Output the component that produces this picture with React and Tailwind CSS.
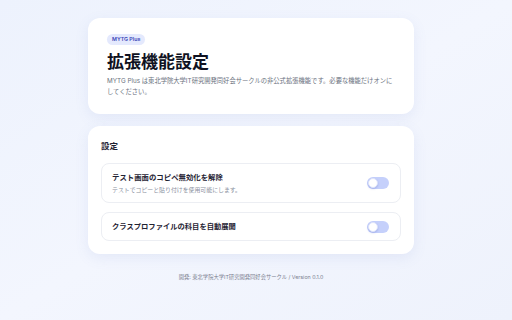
export default function App() {
  const font = { fontFamily: '"Inter", "Noto Sans CJK JP", sans-serif' };
  return (
    <div
      className="min-h-[320px] w-full bg-gradient-to-br from-[#edf2fd] via-[#f3f6fe] to-[#eef2fc] pt-[18px]"
      style={font}
    >
      <div className="ml-[88px] flex w-[326px] flex-col">
        <div className="rounded-[12px] bg-white px-[19px] pt-[16px] pb-[16px] shadow-[0_4px_14px_rgba(99,122,200,0.10)]">
          <div className="flex h-[11px] w-fit items-center rounded-full bg-[#e4e9fd] px-[5px] text-[5.3px] font-semibold leading-[11px] text-[#3b47b8]">
            MYTG Plus
          </div>
          <h1 className="mt-[5px] text-[17px] font-bold leading-[24px] text-[#0f1222]">
            拡張機能設定
          </h1>
          <p className="mt-[2px] text-[6.3px] leading-[11px] text-[#6b7280]">
            MYTG Plus は東北学院大学IT研究開発同好会サークルの非公式拡張機能です。必要な機能だけオンにしてください。
          </p>
        </div>

        <div className="mt-[12px] rounded-[12px] bg-white px-[13px] pt-[13px] pb-[13px] shadow-[0_4px_14px_rgba(99,122,200,0.10)]">
          <h2 className="text-[8.5px] font-semibold leading-[14px] text-[#1f2333]">設定</h2>
          <div className="mt-[10px] flex flex-col gap-[9px]">
            <div className="flex h-[40px] items-center justify-between rounded-[8px] border border-[#eceef3] pl-[10px] pr-[11px]">
              <div className="flex flex-col">
                <span className="text-[7.4px] font-bold leading-[11px] text-[#1f2333]">
                  テスト画面のコピペ無効化を解除
                </span>
                <span className="mt-[2px] text-[5.9px] leading-[10px] text-[#8b90a0]">
                  テストでコピーと貼り付けを使用可能にします。
                </span>
              </div>
              <Toggle />
            </div>
            <div className="flex h-[29px] items-center justify-between rounded-[8px] border border-[#eceef3] pl-[10px] pr-[11px]">
              <span className="text-[7.3px] font-bold leading-[11px] text-[#1f2333]">
                クラスプロファイルの科目を自動展開
              </span>
              <Toggle />
            </div>
          </div>
        </div>

        <p className="mt-[18px] text-center text-[5.3px] leading-[10px] text-[#7b8090]">
          開発: 東北学院大学IT研究開発同好会サークル / Version 0.1.0
        </p>
      </div>
    </div>
  );
}

function Toggle() {
  return (
    <div className="flex h-[12px] w-[22px] items-center rounded-full bg-[#c5d0fb] p-[1px]">
      <div className="h-[10px] w-[10px] rounded-full border border-[#dde3fb] bg-white shadow-[0_1px_2px_rgba(80,100,200,0.3)]" />
    </div>
  );
}
